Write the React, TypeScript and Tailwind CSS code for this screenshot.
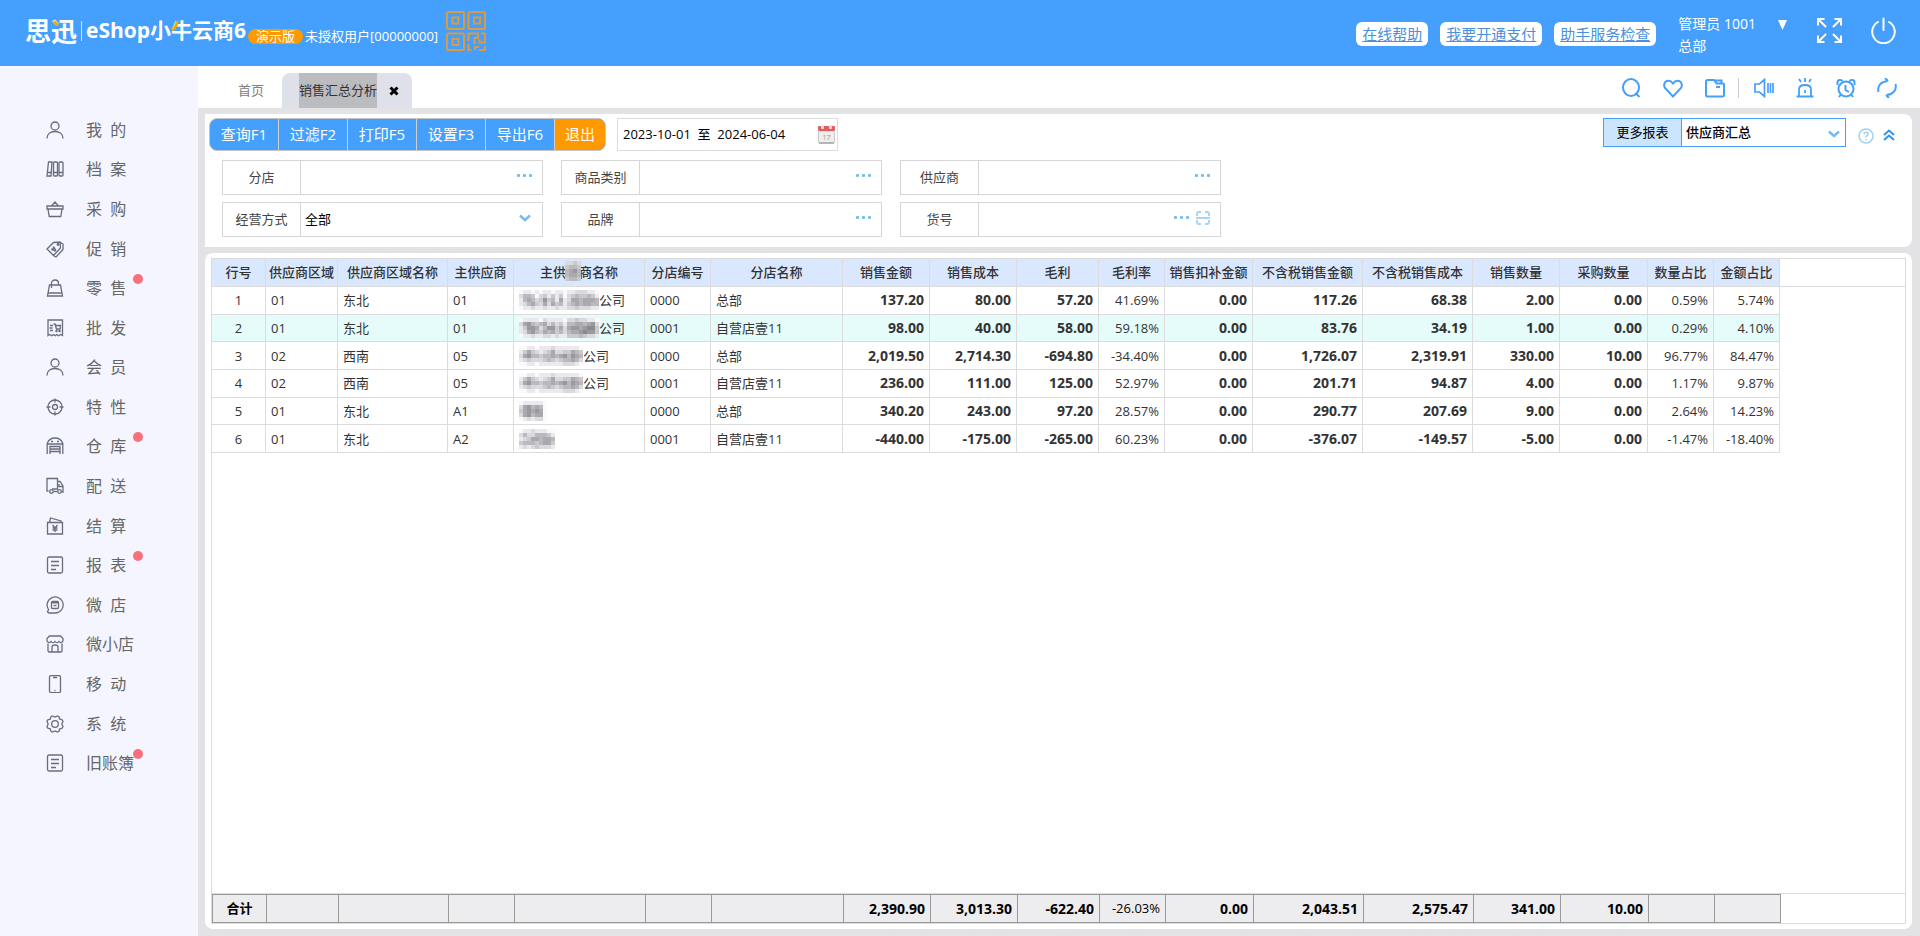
import { useState } from "react";
import type { ReactNode } from "react";
import clsx from "clsx";

type MenuItem = { label: string; icon: ReactNode; dot?: boolean };

type Column = { title: string; width: number; align?: "center" | "right"; bold?: boolean };

const personIcon = (
  <>
    <circle cx="9" cy="5" r="4" />
    <path d="M1 17.500C1 13 4.500 10.500 9 10.500s8 2.500 8 7" />
  </>
);

const noteIcon = (
  <>
    <rect x="1.500" y="1" width="15" height="16" rx="1.500" />
    <path d="M5 5.500h8M5 9.500h8M5 13.500h5" />
  </>
);

const menu: MenuItem[] = [
  { label: "我  的", icon: personIcon },
  {
    label: "档  案",
    icon: (
      <>
        <path d="M2.500 2h3.500l-1 14H1z" />
        <rect x="7.500" y="2" width="4" height="14" rx="1" />
        <rect x="13" y="2" width="4" height="14" rx="1" />
        <path d="M1.500 12.500h3.500M7.500 12.500h4M13 12.500h4" />
      </>
    ),
  },
  {
    label: "采  购",
    icon: (
      <>
        <path d="M1 6h16v3H1zM2 9l1.200 7.500h11.600L16 9M5.500 6L9 2l3.500 4" />
      </>
    ),
  },
  {
    label: "促  销",
    icon: (
      <>
        <path d="M1 9l6.500-6.500L14 2l.5 6-7 7.500zM14.500 2.500L17 4v5.500L10 17l-2-1" />
        <path d="M5.500 8.500l4 3M7 6.500l3 4M5.500 10.500L9 7.500" />
        <circle cx="12" cy="4.500" r=".8" />
      </>
    ),
  },
  {
    label: "零  售",
    dot: true,
    icon: (
      <>
        <path d="M3.500 6h11L16.500 17h-15zM2 14h14" />
        <path d="M5.500 9V4.500C5.500 2.500 7 1 9 1s3.500 1.500 3.500 3.500V6" />
      </>
    ),
  },
  {
    label: "批  发",
    icon: (
      <>
        <path d="M2 1h14.500v15.500l-2-1-1.800 1.300-1.800-1.300-1.700 1.300-1.800-1.300-1.700 1.300-2-1.300-1.700 1z" />
        <path d="M4 6.500h3M3.500 9h3M4 11.500h3M7.500 5h1.500l1.500 5h3.500l.5-3.500H9.500" />
        <circle cx="10.500" cy="12" r=".6" />
        <circle cx="13.500" cy="12" r=".6" />
      </>
    ),
  },
  { label: "会  员", icon: personIcon },
  {
    label: "特  性",
    icon: (
      <>
        <circle cx="9" cy="9" r="7" />
        <circle cx="9" cy="9" r="2.500" />
        <path d="M9 .5v4M9 13.500v4M.5 9h4M13.500 9h4" />
      </>
    ),
  },
  {
    label: "仓  库",
    dot: true,
    icon: (
      <>
        <path d="M1.200 17V6.500C2.500 3 5.500 1 9 1s6.500 2 7.800 5.500V17M1.200 7h15.600M4 17V9.500h10V17M4 12h10M4 14.500h10" />
        <path d="M5 4.500h2M11 4.500h2" />
      </>
    ),
  },
  {
    label: "配  送",
    icon: (
      <>
        <path d="M2.500 14H1V1.500h10.500V12H6M11.500 4.500H14L17 9v6h-1.500M13 7v2.500h4" />
        <circle cx="5.500" cy="14.500" r="1.800" />
        <circle cx="13.500" cy="14.500" r="1.800" />
        <path d="M7.500 14.500h4" />
      </>
    ),
  },
  {
    label: "结  算",
    icon: (
      <>
        <path d="M1.500 5.500h15V17h-15zM3.500 5.500L4.500 1l10.500 3v1.500" />
        <path d="M6.500 8L9 11l2.500-3M9 11v4M6.500 11h5M6.500 13h5" />
      </>
    ),
  },
  { label: "报  表", dot: true, icon: noteIcon },
  {
    label: "微  店",
    icon: (
      <>
        <path d="M3 17h6a8 8 0 1 0-6.500-3.500L1.500 16z" />
        <rect x="5.500" y="5.500" width="7" height="7" rx="1" />
        <path d="M5.500 6.500h7" strokeWidth="2" />
        <path d="M7.500 9.500h3" />
      </>
    ),
  },
  {
    label: "微小店",
    icon: (
      <>
        <path d="M3.500 1h11L17 3.500V6c-1 2-3 2-4 .5-1 1.500-3 1.500-4 0-1 1.500-3 1.500-4 0C4 8 2 8 1 6V3.500zM2 8.500V16l1 1h12l1-1V8.500M6 17v-5c0-1.200 1-2 3-2s3 .8 3 2v5" />
      </>
    ),
  },
  {
    label: "移  动",
    icon: (
      <>
        <rect x="3.500" y=".6" width="11" height="17" rx="1.500" />
        <path d="M7 2.500h4M8.500 15.500h1" />
      </>
    ),
  },
  {
    label: "系  统",
    icon: (
      <>
        <path d="M6.500 1L9 2l2.500-1 1.500.8.8 2.400 2.600.8.600 1.500L15.800 9l1.200 2.500-.6 1.500-2.600.8-.8 2.400-1.500.8L9 16l-2.500 1-1.500-.8-.8-2.400-2.600-.8-.6-1.500L2.200 9 1 6.500 1.600 5l2.600-.8L5 1.800z" />
        <circle cx="9" cy="9" r="3.300" />
      </>
    ),
  },
  { label: "旧账簿", dot: true, icon: noteIcon },
];

const columns: Column[] = [
  { title: "行号", width: 54, align: "center" },
  { title: "供应商区域", width: 72 },
  { title: "供应商区域名称", width: 110 },
  { title: "主供应商", width: 66 },
  { title: "主供应商名称", width: 131 },
  { title: "分店编号", width: 66 },
  { title: "分店名称", width: 132 },
  { title: "销售金额", width: 87, align: "right", bold: true },
  { title: "销售成本", width: 87, align: "right", bold: true },
  { title: "毛利", width: 82, align: "right", bold: true },
  { title: "毛利率", width: 66, align: "right" },
  { title: "销售扣补金额", width: 88, align: "right", bold: true },
  { title: "不含税销售金额", width: 110, align: "right", bold: true },
  { title: "不含税销售成本", width: 110, align: "right", bold: true },
  { title: "销售数量", width: 87, align: "right", bold: true },
  { title: "采购数量", width: 88, align: "right", bold: true },
  { title: "数量占比", width: 66, align: "right" },
  { title: "金额占比", width: 66, align: "right" },
];

// one digit per 4px block: 0 is clear, 9 is the darkest
const masks = {
  header: ["2232", "3443", "4564", "4554", "3443"],
  long: [
    "01101011011011222110",
    "24430231313023433431",
    "14542363415125545554",
    "12453252534134545544",
    "01121121121122322211",
  ],
  longDark: [
    "01111021111022322110",
    "25643452423144554562",
    "13665246635256656773",
    "12564354534245567663",
    "01121122121133343221",
  ],
  middle: [
    "0011011121111110",
    "1353212352233543",
    "2564434454564654",
    "1232223432344542",
    "0011011111122210",
  ],
  short: ["0111110", "2564540", "3565650", "2564550", "0121220"],
  three: ["011211100", "242244431", "123554554", "344434553", "121232221"],
};

const rows: ReactNode[][] = [
  ["1", "01", "东北", "01", <Masked key="n" mask={masks.long} tail="公司" />, "0000", "总部", "137.20", "80.00", "57.20", "41.69%", "0.00", "117.26", "68.38", "2.00", "0.00", "0.59%", "5.74%"],
  ["2", "01", "东北", "01", <Masked key="n" mask={masks.longDark} tail="公司" />, "0001", "自营店壹11", "98.00", "40.00", "58.00", "59.18%", "0.00", "83.76", "34.19", "1.00", "0.00", "0.29%", "4.10%"],
  ["3", "02", "西南", "05", <Masked key="n" mask={masks.middle} tail="公司" />, "0000", "总部", "2,019.50", "2,714.30", "-694.80", "-34.40%", "0.00", "1,726.07", "2,319.91", "330.00", "10.00", "96.77%", "84.47%"],
  ["4", "02", "西南", "05", <Masked key="n" mask={masks.middle} tail="公司" />, "0001", "自营店壹11", "236.00", "111.00", "125.00", "52.97%", "0.00", "201.71", "94.87", "4.00", "0.00", "1.17%", "9.87%"],
  ["5", "01", "东北", "A1", <Masked key="n" mask={masks.short} />, "0000", "总部", "340.20", "243.00", "97.20", "28.57%", "0.00", "290.77", "207.69", "9.00", "0.00", "2.64%", "14.23%"],
  ["6", "01", "东北", "A2", <Masked key="n" mask={masks.three} />, "0001", "自营店壹11", "-440.00", "-175.00", "-265.00", "60.23%", "0.00", "-376.07", "-149.57", "-5.00", "0.00", "-1.47%", "-18.40%"],
];

const totals = ["合计", "", "", "", "", "", "", "2,390.90", "3,013.30", "-622.40", "-26.03%", "0.00", "2,043.51", "2,575.47", "341.00", "10.00", "", ""];

function Mosaic({ mask }: { mask: string[] }) {
  const width = mask[0].length * 4;
  const height = mask.length * 4;
  return (
    <svg width={width} height={height} viewBox={`0 0 ${width} ${height}`} className="shrink-0" aria-hidden="true">
      {mask.map((line, y) =>
        line.split("").map((c, x) => {
          const shade = 250 - Number(c) * 16;
          return (
            <rect
              key={`${x}-${y}`}
              x={x * 4}
              y={y * 4}
              width="4"
              height="4"
              fill={`rgb(${shade},${shade - 1},${shade + 3})`}
            />
          );
        })
      )}
    </svg>
  );
}

function Masked({ mask, tail }: { mask: string[]; tail?: string }) {
  return (
    <span className="flex items-center">
      <Mosaic mask={mask} />
      {tail}
    </span>
  );
}

function QrIcon() {
  return (
    <svg width="40" height="40" viewBox="0 0 40 40" fill="none" stroke="#d99a45" strokeWidth="2" aria-hidden="true">
      <rect x="1" y="1" width="17" height="17" rx="1.500" />
      <rect x="6.500" y="6.500" width="6" height="6" />
      <rect x="22.500" y="1" width="16.500" height="17" rx="1.500" />
      <rect x="28" y="6.500" width="6" height="6" />
      <rect x="1" y="22.500" width="17" height="16.500" rx="1.500" />
      <rect x="6.500" y="28" width="6" height="6" />
      <path d="M22.500 30v-7.500H32v4.500h-3.500v6M35 22.500h4v9h-5.500v-3M22.500 33v6h3M29 39v-3h4M33 39h6v-4.500" />
    </svg>
  );
}

function Header() {
  return (
    <header className="flex h-[66px] shrink-0 items-start justify-between bg-[#459ffc] text-white">
      <div className="flex">
        <div className="relative ml-[25px] mt-[13px] flex h-9 items-center font-bold">
          <span className="text-[26px]">思迅</span>
          <span className="mx-1 h-5 w-px bg-white/70" />
          <span className="text-[21px]">eShop小牛云商6</span>
          <svg className="absolute left-0 top-0" width="220" height="36" viewBox="0 0 220 36" fill="none" stroke="#f5a800" aria-hidden="true">
            <path d="M28.500 8.500l4.500 3.500" strokeWidth="3" />
            <path d="M152 8c0 4-2 7-5 9" strokeWidth="3" />
          </svg>
        </div>
        <span className="ml-[2px] mt-[29px] h-[15px] rounded-full bg-[#ff9900] px-2 text-[13px] leading-[15px]">演示版</span>
        <span className="ml-[2px] mt-[29px] text-[13px] leading-[15px]">未授权用户[00000000]</span>
        <span className="ml-2 mt-[11px]">
          <QrIcon />
        </span>
      </div>
      <div className="flex items-start">
        <nav className="mr-[22px] mt-[22px] flex gap-3 text-[15px] leading-6 text-[#4b8fe0]">
          <a href="#help" className="rounded-md bg-white px-[6px] underline">在线帮助</a>
          <a href="#pay" className="rounded-md bg-white px-[6px] underline">我要开通支付</a>
          <a href="#check" className="rounded-md bg-white px-[6px] underline">助手服务检查</a>
        </nav>
        <button type="button" className="mr-[30px] mt-[13px] flex gap-[22px] text-left text-[14px] leading-[22px]">
          <span>
            管理员 1001
            <br />
            总部
          </span>
          <svg width="9" height="10" viewBox="0 0 9 10" className="mt-[7px]" aria-hidden="true">
            <path d="M0 0h9L4.500 10z" fill="#fff" />
          </svg>
        </button>
        <button type="button" aria-label="全屏" className="mr-[29px] mt-[18px]">
          <svg width="25" height="25" viewBox="0 0 25 25" fill="none" stroke="#fff" strokeWidth="2">
            <path d="M1 7.500V1h6.500M1 1l8 8M17.500 1H24v6.500M24 1l-8 8M1 17.500V24h6.500M1 24l8-8M17.500 24H24v-6.500M24 24l-8-8" />
          </svg>
        </button>
        <button type="button" aria-label="退出系统" className="mr-6 mt-[17px]">
          <svg width="25" height="27" viewBox="0 0 25 27" fill="none" stroke="#fff" strokeWidth="2" strokeLinecap="round">
            <path d="M12.500 1.500V13M7 5a11.300 11.300 0 1 0 11 0" />
          </svg>
        </button>
      </div>
    </header>
  );
}

function Sidebar() {
  return (
    <nav className="w-[198px] shrink-0 bg-[#f4f5ff] pt-11">
      <ul className="grid h-[673px] auto-rows-fr">
        {menu.map((item) => (
          <li key={item.label} className="flex items-center">
            <a href="#menu" className="relative ml-[46px] flex items-center gap-[22px] text-[16px] leading-6 text-[#666]">
              <svg width="18" height="18" viewBox="0 0 18 18" fill="none" stroke="#686c7c" strokeWidth="1.300" aria-hidden="true">
                {item.icon}
              </svg>
              <span className="whitespace-pre">{item.label}</span>
              {item.dot && <i className="absolute left-[87px] top-[-2px] size-[10px] rounded-full bg-[#fa6f7c]" />}
            </a>
          </li>
        ))}
      </ul>
    </nav>
  );
}

function ToolIcon({ label, children }: { label: string; children: ReactNode }) {
  return (
    <button type="button" aria-label={label}>
      <svg width="20" height="20" viewBox="0 0 20 20" fill="none" stroke="#459ffc" strokeWidth="2">
        {children}
      </svg>
    </button>
  );
}

function TabBar() {
  return (
    <div className="flex h-[42px] shrink-0 items-end justify-between bg-white">
      <div className="flex h-[35px] items-center text-[13px]">
        <button type="button" className="ml-10 mr-[18px] text-[#808080]">首页</button>
        <div className="flex h-full items-center rounded-t-lg bg-[#dfe1ea] pl-[17px] pr-[13px] text-[#333]">
          <button type="button" className="h-full bg-[#bbbcc0]">销售汇总分析</button>
          <button type="button" aria-label="关闭" className="ml-3">
            <svg width="10" height="10" viewBox="0 0 10 10" stroke="#000" strokeWidth="3">
              <path d="M1.500 1.500l7 7M8.500 1.500l-7 7" />
            </svg>
          </button>
        </div>
      </div>
      <div className="mr-[23px] flex h-10 items-center">
        <div className="flex gap-[22px]">
          <ToolIcon label="搜索">
            <ellipse cx="10" cy="9.500" rx="8" ry="8.500" />
            <path d="M14.500 15l4 4" />
          </ToolIcon>
          <ToolIcon label="收藏">
            <path d="M10 18.500L2 10C.5 7.500 1 4 4 3c2.500-.8 4.500.3 6 2.500C11.500 3.300 13.500 2.200 16 3c3 1 3.500 4.500 2 7z" />
          </ToolIcon>
          <ToolIcon label="文件夹">
            <path d="M1 3.500C1 2.500 1.500 2 2.500 2H9l2.500 3.500H18c.7 0 1 .5 1 1V17c0 1-.5 1.500-1.500 1.500h-15c-1 0-1.500-.5-1.500-1.500zM10 2.500h6.500v3M11 9h4" />
          </ToolIcon>
        </div>
        <span className="ml-[13px] mr-[15px] h-5 w-px bg-[#ccc]" />
        <div className="flex gap-[21px]">
          <ToolIcon label="声音">
            <path d="M10.500 1.500v17L5.500 14H1V6h4.500zM14 5v10M16.500 5v10M19 5v10" strokeWidth="1.700" />
          </ToolIcon>
          <ToolIcon label="报警">
            <path d="M1.500 18.500h17M4 18v-6.500C4 8.500 6.500 7 10 7s6 1.500 6 4.500V18M10 0v4M4 1l2 3M16 1l-2 3M10 12v3" strokeWidth="1.800" />
          </ToolIcon>
          <ToolIcon label="提醒">
            <circle cx="10" cy="11" r="7.500" />
            <path d="M1.500 7V4c0-2 3-3 5-1M18.500 7V4c0-2-3-3-5-1M9.500 7v5l3.500 2M4.500 17L3 19M15.500 17l1.500 2" />
          </ToolIcon>
          <ToolIcon label="刷新">
            <path d="M1.500 14C0 8 4 3.500 10.500 3M8 0l3 3M18.500 6c1.500 6-2.500 10.500-9 11M12 20l-3-3" />
          </ToolIcon>
        </div>
      </div>
    </div>
  );
}

function Dots() {
  return (
    <svg width="15" height="4" viewBox="0 0 15 4" fill="#76bdee" aria-hidden="true">
      <rect x="0" y="0" width="3" height="3" rx="1" />
      <rect x="6" y="0" width="3" height="3" rx="1" />
      <rect x="12" y="0" width="3" height="3" rx="1" />
    </svg>
  );
}

function ChevronDown() {
  return (
    <svg width="12" height="8" viewBox="0 0 12 8" fill="none" stroke="#76bdee" strokeWidth="2.500" aria-hidden="true">
      <path d="M1 1.500l5 4.500 5-4.500" />
    </svg>
  );
}

function Filter({ id, label, options, scan }: { id: string; label: string; options?: string[]; scan?: boolean }) {
  return (
    <div className="flex h-[35px] w-[321px] border border-[#d6d6d6]">
      <label htmlFor={id} className="flex w-[78px] shrink-0 items-center justify-center border-r border-[#d6d6d6] text-[#444]">
        {label}
      </label>
      {options ? (
        <div className="relative flex-1">
          <select id={id} className="size-full appearance-none pl-1 text-black outline-none">
            {options.map((o) => (
              <option key={o}>{o}</option>
            ))}
          </select>
          <span className="pointer-events-none absolute right-[11px] top-[11px]">
            <ChevronDown />
          </span>
        </div>
      ) : (
        <>
          <input id={id} type="text" className="min-w-0 flex-1 px-1 outline-none" />
          <button type="button" aria-label={`选择${label}`} className={clsx("mb-1", scan ? "mr-[7px]" : "mr-[10px]")}>
            <Dots />
          </button>
          {scan && (
            <button type="button" aria-label="扫码" className="mb-1 mr-[10px]">
              <svg width="14" height="14" viewBox="0 0 14 14" fill="none" stroke="#a6d6f5" strokeWidth="2">
                <path d="M1 5V3c0-1.200.8-2 2-2h2M9 1h2c1.200 0 2 .8 2 2v2M1 9v2c0 1.200.8 2 2 2h2M9 13h2c1.200 0 2-.8 2-2V9M0 7h14" />
              </svg>
            </button>
          )}
        </>
      )}
    </div>
  );
}

function QueryPanel() {
  const [range, setRange] = useState("2023-10-01  至  2024-06-04");
  return (
    <section className="h-[133px] shrink-0 rounded-r-lg bg-white pt-1 text-[13px]">
      <div className="flex items-start justify-between pl-1">
        <div className="flex">
          <div className="flex h-[33px] divide-x divide-[#cfcfcf] overflow-hidden rounded-lg border border-[#c4c4c4] bg-[#459ffc] text-[15px] text-white">
            {["查询F1", "过滤F2", "打印F5", "设置F3", "导出F6"].map((text) => (
              <button key={text} type="button" className="w-[69px]">
                {text}
              </button>
            ))}
            <button type="button" className="w-[50px] bg-[#ff9900]">退出</button>
          </div>
          <div className="ml-[11px] flex h-[33px] w-[221px] items-center justify-between border border-[#dcdcdc] pr-[2px]">
            <input
              type="text"
              aria-label="日期范围"
              value={range}
              onChange={(e) => setRange(e.target.value)}
              className="w-[190px] pl-[5px] text-black outline-none"
            />
            <svg width="17" height="19" viewBox="0 0 17 19" aria-hidden="true">
              <rect x=".5" y="6" width="16" height="12" rx="1" fill="#eee" stroke="#c9c9c9" />
              <path d="M1 18h15" stroke="#a8a8a8" strokeWidth="1.500" />
              <rect x="0" y="1" width="17" height="5" rx="1" fill="#dd6060" />
              <rect x="3" y="0" width="3" height="4" rx="1" fill="#f3dada" />
              <rect x="11" y="0" width="3" height="4" rx="1" fill="#f3dada" />
              <text x="4.500" y="15" fontSize="7" fill="#999">17</text>
            </svg>
          </div>
        </div>
        <div className="mr-[17px] flex">
          <div className="flex h-[29px] w-[243px] border border-[#459ffc]">
            <label htmlFor="report" className="flex w-[78px] shrink-0 items-center justify-center border-r border-[#459ffc] bg-[#cce5ff] text-black">
              更多报表
            </label>
            <div className="relative flex-1">
              <select id="report" className="size-full appearance-none pl-1 font-medium text-black outline-none">
                <option>供应商汇总</option>
              </select>
              <span className="pointer-events-none absolute right-[5px] top-[11px]">
                <ChevronDown />
              </span>
            </div>
          </div>
          <button type="button" aria-label="帮助" className="ml-3 mt-[6px]">
            <svg width="16" height="16" viewBox="0 0 16 16" fill="none" stroke="#9fd0f5" strokeWidth="1.500">
              <circle cx="8" cy="8" r="7" />
              <path d="M6 6.200c0-2.700 4-2.700 4 0C10 7.700 8 7.500 8 9.500M8 11v1.500" />
            </svg>
          </button>
          <button type="button" aria-label="收起" className="ml-[9px] mt-[5px]">
            <svg width="12" height="12" viewBox="0 0 12 12" fill="none" stroke="#2f95e8" strokeWidth="2">
              <path d="M1 6l5-4.500L11 6M1 11l5-4.500 5 4.500" />
            </svg>
          </button>
        </div>
      </div>
      <div className="ml-[17px] mt-[9px] flex flex-wrap gap-x-[18px] gap-y-[7px] pr-[600px]">
        <Filter id="shop" label="分店" />
        <Filter id="category" label="商品类别" />
        <Filter id="supplier" label="供应商" />
        <Filter id="mode" label="经营方式" options={["全部"]} />
        <Filter id="brand" label="品牌" />
        <Filter id="sku" label="货号" scan />
      </div>
    </section>
  );
}

function ColGroup() {
  return (
    <colgroup>
      {columns.map((col) => (
        <col key={col.title} style={{ width: col.width }} />
      ))}
    </colgroup>
  );
}

function alignClass(col: Column) {
  return clsx(
    col.align === "right" ? "pr-[5px] text-right" : col.align === "center" ? "text-center" : "pl-[5px] text-left",
    col.bold ? "text-[14px] font-bold" : "font-normal"
  );
}

function ReportTable() {
  return (
    <section className="flex flex-1 flex-col rounded-lg bg-white px-[6px] pb-[5px] pt-[5px] text-[13px]">
      <div className="flex flex-1 flex-col overflow-hidden border border-[#dcdcdc]">
        <div className="flex flex-1 items-start">
          <table className="w-[1568px] shrink-0 table-fixed border-separate border-spacing-0 whitespace-nowrap text-[#333]">
            <ColGroup />
            <thead>
              <tr className="h-7 bg-[#d9e7ff]">
                {columns.map((col, i) => (
                  <th key={col.title} className="border-b border-r border-[#dcdcdc] p-0 text-center font-medium">
                    {i === 4 ? (
                      <span className="relative">
                        {col.title}
                        <span className="absolute left-[25px] top-[-2px]">
                          <Mosaic mask={masks.header} />
                        </span>
                      </span>
                    ) : (
                      col.title
                    )}
                  </th>
                ))}
              </tr>
            </thead>
            <tbody className="h-[166px]">
              {rows.map((row, r) => (
                <tr key={r} className={r === 1 ? "bg-[#e6fcfb]" : "bg-white"}>
                  {row.map((value, c) => (
                    <td key={c} className={clsx("border-b border-r border-[#dcdcdc] py-0 leading-[18px]", alignClass(columns[c]))}>
                      {value}
                    </td>
                  ))}
                </tr>
              ))}
            </tbody>
          </table>
          <div className="h-7 flex-1 border-b border-[#dcdcdc]" />
        </div>
        <div className="border-t border-[#dcdcdc]">
          <table className="w-[1569px] table-fixed border-separate border-spacing-0 border-l border-[#999] bg-[#ededef] text-black">
            <ColGroup />
            <tbody>
              <tr className="h-[29px]">
                {totals.map((value, i) => (
                  <td
                    key={i}
                    className={clsx("border-y border-r border-[#999] py-0", i === 0 ? "text-center font-bold" : alignClass(columns[i]))}
                  >
                    {value}
                  </td>
                ))}
              </tr>
            </tbody>
          </table>
        </div>
      </div>
    </section>
  );
}

export default function App() {
  return (
    <div className="flex min-h-screen flex-col font-['Open_Sans','Noto_Sans_CJK_SC',sans-serif]">
      <Header />
      <div className="flex flex-1">
        <Sidebar />
        <main className="flex min-w-0 flex-1 flex-col bg-[#e3e3e5]">
          <TabBar />
          <div className="flex flex-1 flex-col gap-[6px] pb-[7px] pl-[7px] pr-2 pt-[6px]">
            <QueryPanel />
            <ReportTable />
          </div>
        </main>
      </div>
    </div>
  );
}
